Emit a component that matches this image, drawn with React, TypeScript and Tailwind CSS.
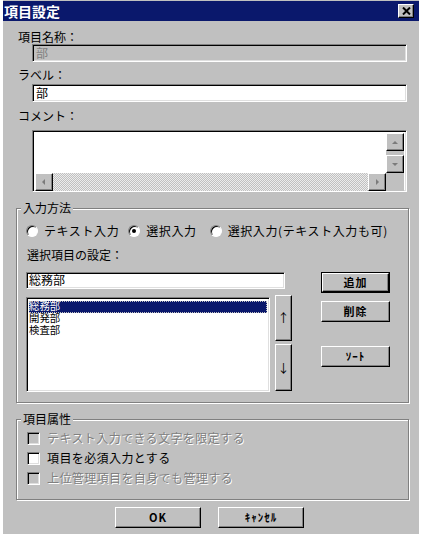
import { ReactNode } from "react"

const font = "font-['Noto_Sans_CJK_JP','Noto_Sans_CJK_SC',sans-serif]"

// 3D borders in the old Windows style
const sunken =
    "border border-t-[#808080] border-l-[#808080] border-b-white border-r-white shadow-[inset_1px_1px_0_#000,inset_-1px_-1px_0_#dfdfdf]"
const raised =
    "border border-t-white border-l-white border-b-black border-r-black shadow-[inset_-1px_-1px_0_#808080]"
const etched =
    "border border-[#808080] shadow-[1px_1px_0_#fff,inset_1px_1px_0_#fff]"

function Label({ children }: { children: ReactNode }) {
    return <div className="h-[14px] leading-[14px] text-[12px] text-black">{children}</div>
}

function Button({ children, w, def }: { children: ReactNode; w: string; def?: boolean }) {
    return (
        <div className={`${w} h-[21px] ${def ? "border border-black" : ""}`}>
            <div className={`w-full h-full ${raised} bg-[#c0c0c0] flex items-center justify-center text-[11px] font-bold tracking-[1px]`}>
                {children}
            </div>
        </div>
    )
}

function Radio({ checked, label }: { checked?: boolean; label: string }) {
    return (
        <div className="flex items-center gap-[6px]">
            <div className="w-[12px] h-[12px] rounded-full bg-white border border-t-[#808080] border-l-[#808080] border-b-white border-r-white shadow-[inset_1px_1px_0_#000] flex items-center justify-center">
                {checked && <div className="w-[4px] h-[4px] rounded-full bg-black" />}
            </div>
            <span className="text-[12px] leading-[14px] tracking-[0.6px]">{label}</span>
        </div>
    )
}

function Check({ label, disabled }: { label: string; disabled?: boolean }) {
    return (
        <div className="flex items-center gap-[7px] h-[14px]">
            <div className={`w-[13px] h-[13px] ${sunken} ${disabled ? "bg-[#c0c0c0]" : "bg-white"}`} />
            <span
                className={`text-[12px] leading-[14px] tracking-[0.4px] ${disabled ? "text-[#808080] [text-shadow:1px_1px_0_#fff]" : "text-black"}`}
            >
                {label}
            </span>
        </div>
    )
}

function Arrow({ dir }: { dir: "up" | "down" | "left" | "right" }) {
    const pts = {
        up: "1,6 4,3 7,6",
        down: "1,3 4,6 7,3",
        left: "5,1 2,4 5,7",
        right: "3,1 6,4 3,7",
    }[dir]
    return (
        <svg width="8" height="8" viewBox="0 0 8 8">
            <polygon points={pts} fill="#7b7b7b" />
        </svg>
    )
}

function ScrollBtn({ dir, cls }: { dir: "up" | "down" | "left" | "right"; cls: string }) {
    return (
        <div className={`${cls} ${raised} bg-[#c0c0c0] flex items-center justify-center`}>
            <Arrow dir={dir} />
        </div>
    )
}

function Group({ title, children, h }: { title: string; children: ReactNode; h: string }) {
    return (
        <div className={`relative ml-[13px] w-[393px] ${h} ${etched}`}>
            <span className="absolute -top-[8px] left-[4px] px-[2px] bg-[#c0c0c0] text-[12px] leading-[14px]">
                {title}
            </span>
            {children}
        </div>
    )
}

export default function App() {
    return (
        <div className={`w-[424px] h-[539px] bg-white ${font}`}>
            <div className="ml-[3px] w-[416px] h-[534px] bg-[#c0c0c0] flex flex-col">
                {/* Title bar */}
                <div className="mt-[1px] h-[20px] bg-[#0a186c] flex items-center justify-between pl-[1px] pr-[5px]">
                    <span className="text-white text-[14px] font-bold leading-[20px]">項目設定</span>
                    <div className={`w-[16px] h-[14px] ${raised} bg-[#c0c0c0] flex items-center justify-center`}>
                        <svg width="9" height="8" viewBox="0 0 9 8">
                            <path d="M1 0.5 L8 7.5 M8 0.5 L1 7.5" stroke="#000" strokeWidth="2" />
                        </svg>
                    </div>
                </div>

                <div className="pl-[15px] mt-[9px]">
                    <Label>項目名称：</Label>
                </div>
                <div className={`ml-[29px] w-[375px] h-[18px] ${sunken} bg-[#c0c0c0] pl-[3px] text-[12px] leading-[15px] text-[#808080]`}>
                    部
                </div>

                <div className="pl-[15px] mt-[6px]">
                    <Label>ラベル：</Label>
                </div>
                <div className={`ml-[29px] mt-[2px] w-[375px] h-[18px] ${sunken} bg-white pl-[3px] text-[12px] leading-[15px]`}>
                    部
                </div>

                <div className="pl-[15px] mt-[7px]">
                    <Label>コメント：</Label>
                </div>
                <div className={`ml-[29px] mt-[7px] w-[375px] h-[62px] ${sunken} bg-white p-[2px] flex flex-col`}>
                    <div className="flex-1 flex">
                        <div className="flex-1" />
                        <div className="w-[18px] flex flex-col bg-[#c0c0c0]">
                            <ScrollBtn dir="up" cls="w-[18px] h-[18px]" />
                            <div className="h-[4px] bg-[#c0c0c0]" />
                            <ScrollBtn dir="down" cls="w-[18px] h-[18px]" />
                        </div>
                    </div>
                    <div className="h-[18px] flex">
                        <ScrollBtn dir="left" cls="w-[18px] h-[18px]" />
                        <div className="flex-1 bg-[repeating-conic-gradient(#c0c0c0_0%_25%,#ececec_0%_50%)] bg-size-[2px_2px]" />
                        <ScrollBtn dir="right" cls="w-[18px] h-[18px]" />
                        <div className="w-[18px] bg-[#c0c0c0]" />
                    </div>
                </div>

                {/* 入力方法 */}
                <div className="mt-[16px]">
                    <Group title="入力方法" h="h-[195px]">
                        <div className="pt-[15px] pl-[9px] flex items-center">
                            <Radio label="テキスト入力" />
                            <div className="ml-[9px]">
                                <Radio checked label="選択入力" />
                            </div>
                            <div className="ml-[13px]">
                                <Radio label="選択入力(テキスト入力も可)" />
                            </div>
                        </div>
                        <div className="mt-[10px] pl-[10px]">
                            <Label>選択項目の設定：</Label>
                        </div>
                        <div className="mt-[10px] pl-[9px] flex">
                            <div className="flex flex-col">
                                <div className={`w-[259px] h-[17px] ${sunken} bg-white pl-[2px] text-[12px] leading-[14px]`}>
                                    総務部
                                </div>
                                <div className="mt-[8px] flex">
                                    <div className={`w-[244px] h-[95px] ${sunken} bg-white p-[2px] font-['Liberation_Sans','Noto_Sans_CJK_JP',sans-serif] text-[10.4px] leading-[12px]`}>
                                        <div className="mt-[1px] h-[12px] bg-[#0a186c] text-white outline-1 outline-dotted outline-[#c0c0c0] -outline-offset-1">
                                            総務部
                                        </div>
                                        <div className="h-[12px]">開発部</div>
                                        <div className="h-[12px]">検査部</div>
                                    </div>
                                    <div className="ml-[5px] -mt-[2px] flex flex-col gap-[3px]">
                                        <div className={`w-[17px] h-[46px] ${raised} bg-[#c0c0c0] flex items-center justify-center text-[12px]`}>
                                            ↑
                                        </div>
                                        <div className={`w-[17px] h-[47px] ${raised} bg-[#c0c0c0] flex items-center justify-center text-[12px]`}>
                                            ↓
                                        </div>
                                    </div>
                                </div>
                            </div>
                            <div className="ml-[29px] flex flex-col">
                                <Button w="w-[69px]" def>
                                    追加
                                </Button>
                                <div className="mt-[8px]">
                                    <Button w="w-[69px]">削除</Button>
                                </div>
                                <div className="mt-[24px]">
                                    <Button w="w-[69px]">ｿｰﾄ</Button>
                                </div>
                            </div>
                        </div>
                    </Group>
                </div>

                {/* 項目属性 */}
                <div className="mt-[16px]">
                    <Group title="項目属性" h="h-[81px]">
                        <div className="pt-[11px] pl-[10px] flex flex-col gap-[6px]">
                            <Check disabled label="テキスト入力できる文字を限定する" />
                            <Check label="項目を必須入力とする" />
                            <Check disabled label="上位管理項目を自身でも管理する" />
                        </div>
                    </Group>
                </div>

                <div className="mt-[7px] flex pl-[112px] gap-[17px]">
                    <Button w="w-[86px]">OK</Button>
                    <Button w="w-[86px]">ｷｬﾝｾﾙ</Button>
                </div>
            </div>
        </div>
    )
}
